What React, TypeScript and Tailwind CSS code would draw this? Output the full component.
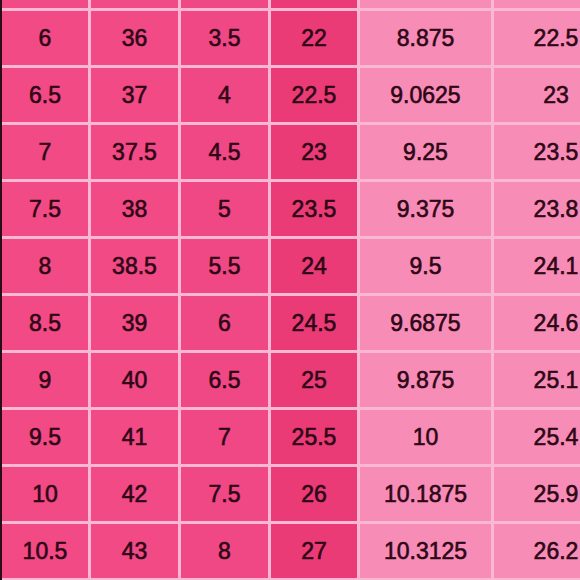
const ROWS = [
  ['6', '36', '3.5', '22', '8.875', '22.5'],
  ['6.5', '37', '4', '22.5', '9.0625', '23'],
  ['7', '37.5', '4.5', '23', '9.25', '23.5'],
  ['7.5', '38', '5', '23.5', '9.375', '23.8'],
  ['8', '38.5', '5.5', '24', '9.5', '24.1'],
  ['8.5', '39', '6', '24.5', '9.6875', '24.6'],
  ['9', '40', '6.5', '25', '9.875', '25.1'],
  ['9.5', '41', '7', '25.5', '10', '25.4'],
  ['10', '42', '7.5', '26', '10.1875', '25.9'],
  ['10.5', '43', '8', '27', '10.3125', '26.2'],
]

// column tints: three hot pink, one deeper, two pale
const CELL_BG = [
  'bg-[#f14a85]',
  'bg-[#f14a85]',
  'bg-[#f04884]',
  'bg-[#ea3b77]',
  'bg-[#f78db7]',
  'bg-[#f78db7]',
]

export default function App() {
  return (
    <div className="w-[580px] h-[580px] overflow-hidden flex bg-[#fbb8d2]">
      {/* dark edge on the left */}
      <div className="w-[2px] shrink-0 bg-[#2a0c16]" />

      <div
        className="grid shrink-0 gap-[3px] grid-cols-[86px_87px_87px_86px_131px_124px] grid-rows-[8px_repeat(10,54px)] text-[23px] text-[#2e0716] [-webkit-text-stroke:0.6px_#2e0716]"
        style={{ fontFamily: '"Liberation Sans", Arial, sans-serif' }}
      >
        {/* cut-off row at the top */}
        {CELL_BG.map((bg, i) => (
          <div key={`top-${i}`} className={bg} />
        ))}

        {ROWS.map((row, r) =>
          row.map((val, c) => (
            <div
              key={`${r}-${c}`}
              className={`${CELL_BG[c]} flex items-center justify-center leading-none`}
            >
              {val}
            </div>
          )),
        )}
      </div>
    </div>
  )
}
